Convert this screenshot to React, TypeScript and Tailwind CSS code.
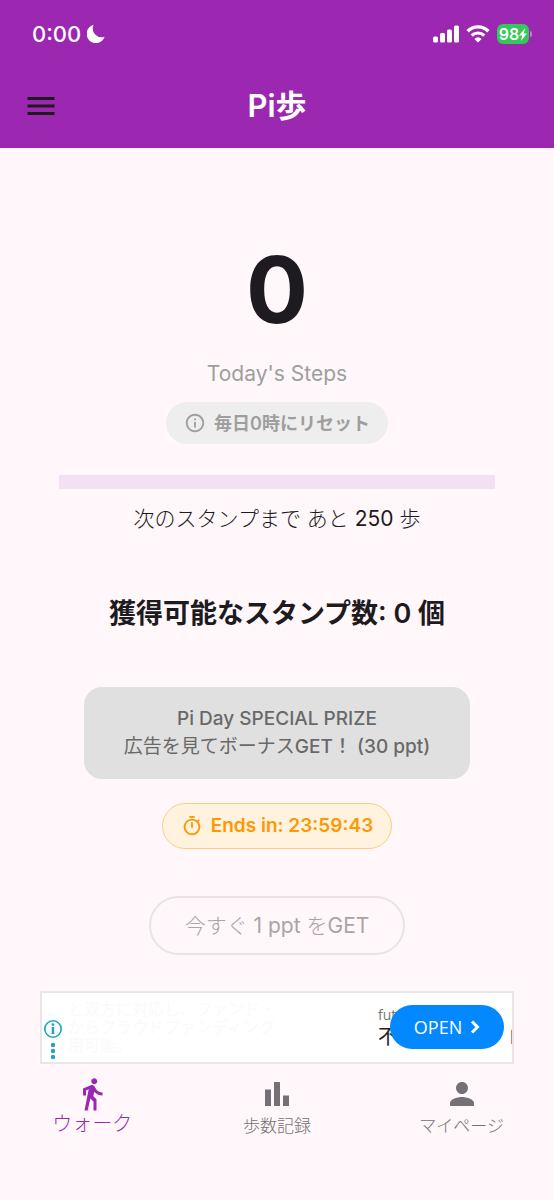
import type { ReactNode } from "react";
import { MdDirectionsWalk, MdInfoOutline, MdMenu, MdOutlineTimer, MdPerson } from "react-icons/md";

function BarsIcon({ className }: { className?: string }) {
  return (
    <svg viewBox="0 0 24 24" className={className} fill="currentColor">
      <path d="M4 9h4v11H4zM10 4h4v16h-4zM16 13h4v7h-4z" />
    </svg>
  );
}

const NAV_ITEMS = [
  { label: "ウォーク", icon: MdDirectionsWalk, active: true },
  { label: "歩数記録", icon: BarsIcon, active: false },
  { label: "マイページ", icon: MdPerson, active: false },
];

function StatusBar() {
  return (
    <div className="flex h-[68px] items-center justify-between pl-8 pr-[22px]">
      <div className="flex items-center gap-1.5">
        <span className="text-[22px] leading-6 font-medium">0:00</span>
        <svg viewBox="0 0 18 20" className="h-5 w-[18px]" fill="currentColor">
          <path d="M6.500 0.800A9.300 9.300 0 1 0 17.700 12.800A9 9 0 0 1 6.500 0.800z" />
        </svg>
      </div>
      <div className="flex items-center gap-[7px]">
        {/* Signal */}
        <svg viewBox="0 0 26 18" className="h-[18px] w-[26px]" fill="currentColor">
          <rect x="0" y="11.500" width="5" height="6" rx="1.500" />
          <rect x="7" y="8" width="5" height="9.500" rx="1.500" />
          <rect x="14" y="4.500" width="5" height="13" rx="1.500" />
          <rect x="21" y="0.500" width="5" height="17" rx="1.500" />
        </svg>
        {/* Wifi */}
        <svg viewBox="0 0 24 18" className="h-[18px] w-6" fill="none" stroke="currentColor">
          <path d="M1.600 6.200a14.600 14.600 0 0 1 20.800 0" strokeWidth="3.400" />
          <path d="M5.700 10.600a8.900 8.900 0 0 1 12.600 0" strokeWidth="3.200" />
          <path d="M12 17.600l-3.600-3.700a5 5 0 0 1 7.200 0z" fill="currentColor" stroke="none" />
        </svg>
        {/* Battery */}
        <div className="flex items-center gap-px">
          <div className="flex h-5 w-8 items-center justify-center rounded-md bg-[#34c759]">
            <span className="text-[16px] leading-5 font-semibold">98</span>
            <svg viewBox="0 0 8 13" className="h-[13px] w-2" fill="currentColor">
              <path d="M6.200 0L0 7.400h3.300L1.800 13 8 5.500H4.700z" />
            </svg>
          </div>
          <span className="h-[6px] w-[2px] rounded-r-full bg-white/40" />
        </div>
      </div>
    </div>
  );
}

function Pill({ className, children }: { className: string; children: ReactNode }) {
  return (
    <div className={`flex items-center gap-2 rounded-full font-semibold ${className}`}>
      {children}
    </div>
  );
}

function AdBanner() {
  return (
    <div className="relative mx-10 mt-9 h-[73px] self-stretch overflow-hidden border-2 border-[#ebe4e8] bg-white font-['Open_Sans','Noto_Sans_CJK_JP',sans-serif]">
      {/* Fading copy */}
      <div className="absolute top-[7px] left-[26px] text-[16px] leading-[18px] whitespace-nowrap text-[#fafafa]">
        <p>と双方に対応し、ファンド・</p>
        <p>からクラウドファンディング</p>
        <p>用可能。</p>
      </div>

      {/* Ad choices */}
      <div className="absolute top-[26px] left-px flex flex-col items-center text-[#1ba6bb]">
        <svg viewBox="0 0 20 20" className="size-5" fill="none" stroke="currentColor">
          <circle cx="10" cy="10" r="8.200" strokeWidth="1.600" />
          <path d="M10 8v7" strokeWidth="2.400" />
          <path d="M8.600 8.600H10M8.600 14.500h2.800" strokeWidth="1.200" />
          <circle cx="10" cy="5.600" r="1.400" fill="currentColor" stroke="none" />
        </svg>
        <svg viewBox="0 0 6 18" className="mt-[3px] h-[18px] w-[6px]" fill="currentColor">
          <circle cx="3" cy="3" r="2.200" />
          <circle cx="3" cy="9" r="2.200" />
          <circle cx="3" cy="15" r="2.200" />
        </svg>
      </div>

      {/* Advertiser */}
      <div className="absolute top-3 right-[-12px] w-[146px] whitespace-nowrap">
        <p className="text-sm leading-5 text-[#777777]">fut</p>
        <p className="flex justify-between text-xl leading-6 text-[#222222]">
          <span>不</span>
          <span className="text-[#777777]">H</span>
        </p>
      </div>
      <button className="absolute top-3 right-2 flex h-11 w-[114px] items-center justify-center gap-2 rounded-full bg-[#0388ff] text-lg leading-6 text-white">
        OPEN
        <svg viewBox="0 0 10 14" className="h-[14px] w-[10px]" fill="none" stroke="currentColor">
          <path d="M2 1.500L7.500 7 2 12.500" strokeWidth="3" />
        </svg>
      </button>
    </div>
  );
}

function BottomNav() {
  return (
    <nav className="grid h-[136px] grid-cols-3 pt-3">
      {NAV_ITEMS.map(({ label, icon: Icon, active }) => (
        <a
          key={label}
          href="#"
          className={`flex flex-col items-center ${
            active
              ? "text-[20px] leading-6 font-light text-[#9c27b0]"
              : "text-[17px] leading-7 font-light text-[#757075]"
          }`}
        >
          <Icon className="size-9" />
          <span>{label}</span>
        </a>
      ))}
    </nav>
  );
}

export default function App() {
  return (
    <div className="flex min-h-screen flex-col bg-[#fff7fa] font-['Inter','Noto_Sans_CJK_JP',sans-serif] text-[#1d1b20]">
      {/* Header */}
      <header className="h-[148px] bg-[#9c27b0] text-white">
        <StatusBar />
        <div className="grid h-[76px] grid-cols-[36px_1fr_36px] items-center px-[23px]">
          <button aria-label="Menu" className="text-[#1d1b20]">
            <MdMenu className="size-9" />
          </button>
          <h1 className="text-center text-[31px] leading-9 font-semibold">Pi歩</h1>
        </div>
      </header>

      <main className="flex flex-1 flex-col items-center">
        {/* Steps */}
        <p className="mt-[94px] text-[92px] leading-[96px] font-bold">0</p>
        <p className="mt-6 text-[21px] leading-6 text-[#9e9e9e]">Today's Steps</p>
        <Pill className="mt-4 h-[42px] bg-[#eeeeee] px-[18px] text-[18px] text-[#9e9e9e]">
          <MdInfoOutline className="size-[22px]" />
          毎日0時にリセット
        </Pill>

        {/* Progress to the next stamp */}
        <div className="mt-[31px] self-stretch px-[59px]">
          <div className="h-[14px] bg-[#f3e1f3]" />
        </div>
        <p className="mt-4 text-[21px] leading-7">
          <span className="font-light">次のスタンプまで あと</span> 250{" "}
          <span className="font-light">歩</span>
        </p>
        <h2 className="mt-[63px] text-[27px] leading-9 font-semibold">
          獲得可能なスタンプ数: 0 個
        </h2>

        {/* Bonus */}
        <button className="mt-[55px] rounded-[18px] bg-[#e0e0e0] px-10 py-[18px] text-[19px] leading-7 font-medium text-[#696969]">
          Pi Day SPECIAL PRIZE
          <br />
          <span className="font-normal">広告を見てボーナス</span>GET！ (30 ppt)
        </button>
        <Pill className="mt-6 h-[46px] border border-[#ffcc80] bg-[#fff3e0] px-[18px] text-[19px] text-[#ff9800]">
          <MdOutlineTimer className="size-[22px]" />
          Ends in: 23:59:43
        </Pill>
        <button className="mt-[47px] h-[59px] rounded-full border-2 border-[#ebe2e7] px-[34px] text-[21px] text-[#aaa4a7]">
          <span className="font-light">今すぐ</span> 1 ppt <span className="font-light">を</span>
          GET
        </button>

        <AdBanner />
      </main>

      <BottomNav />
    </div>
  );
}
